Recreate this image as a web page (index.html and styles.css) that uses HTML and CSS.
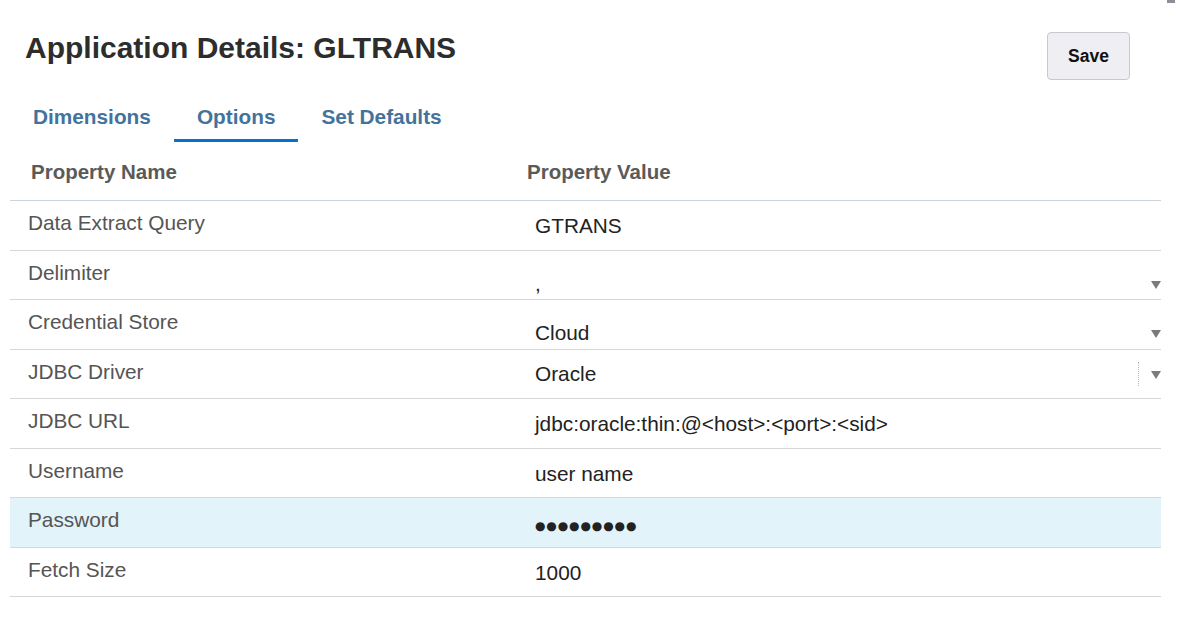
FILE: index.html
```html
<!DOCTYPE html>
<html>
<head>
<meta charset="utf-8">
<link rel="stylesheet" href="styles.css">
</head>
<body>
<div class="corner"></div>
<div class="page">
  <div class="title-row">
    <h1 class="title">Application Details: GLTRANS</h1>
    <button class="save">Save</button>
  </div>
  <div class="tabs">
    <div class="tab">Dimensions</div>
    <div class="tab active">Options</div>
    <div class="tab">Set Defaults</div>
  </div>
  <div class="table">
    <div class="row head">
      <div class="cell name">Property Name</div>
      <div class="cell value">Property Value</div>
    </div>
    <div class="row">
      <div class="cell name">Data Extract Query</div>
      <div class="cell value">GTRANS</div>
    </div>
    <div class="row">
      <div class="cell name">Delimiter</div>
      <div class="cell value select low"><span>,</span><svg class="arrow" width="10" height="8" viewBox="0 0 10 8"><polygon points="0,0 10,0 5,8" fill="#7b7b7b"/></svg></div>
    </div>
    <div class="row">
      <div class="cell name">Credential Store</div>
      <div class="cell value select low"><span>Cloud</span><svg class="arrow" width="10" height="8" viewBox="0 0 10 8"><polygon points="0,0 10,0 5,8" fill="#7b7b7b"/></svg></div>
    </div>
    <div class="row">
      <div class="cell name">JDBC Driver</div>
      <div class="cell value select"><span>Oracle</span><span class="sep"></span><svg class="arrow" width="10" height="8" viewBox="0 0 10 8"><polygon points="0,0 10,0 5,8" fill="#7b7b7b"/></svg></div>
    </div>
    <div class="row">
      <div class="cell name">JDBC URL</div>
      <div class="cell value">jdbc:oracle:thin:@&lt;host&gt;:&lt;port&gt;:&lt;sid&gt;</div>
    </div>
    <div class="row">
      <div class="cell name">Username</div>
      <div class="cell value">user name</div>
    </div>
    <div class="row selected">
      <div class="cell name">Password</div>
      <div class="cell value"><span class="dots">●●●●●●●●●</span></div>
    </div>
    <div class="row">
      <div class="cell name">Fetch Size</div>
      <div class="cell value">1000</div>
    </div>
  </div>
</div>
</body>
</html>
```

FILE: styles.css
```css
html, body {
  margin: 0;
  padding: 0;
  background: #ffffff;
}

body {
  font-family: "Liberation Sans", Arial, sans-serif;
  color: #333;
  position: relative;
  width: 1177px;
  height: 629px;
  overflow: hidden;
}

.corner {
  position: absolute;
  top: 0;
  left: 1167px;
  width: 8px;
  height: 3px;
  background: #8a8f96;
}

.page {
  padding: 0 16px 0 10px;
}

.title-row {
  display: flex;
  justify-content: space-between;
  align-items: flex-start;
  padding: 31px 31px 0 15px;
}

.title {
  margin: 0;
  font-size: 30px;
  line-height: 34px;
  font-weight: bold;
  color: #2d2d2d;
}

.save {
  margin-top: 1px;
  width: 83px;
  height: 48px;
  box-sizing: border-box;
  border: 1px solid #c6cad0;
  border-radius: 4px;
  background: #efeff3;
  font-family: "Liberation Sans", Arial, sans-serif;
  font-size: 17.5px;
  font-weight: bold;
  color: #111;
  padding: 0;
}

.tabs {
  display: flex;
  margin-top: 25px;
}

.tab {
  padding: 0 23px 10px;
  font-size: 20.8px;
  line-height: 24px;
  font-weight: bold;
  color: #43739c;
  border-bottom: 3px solid transparent;
}

.tab.active {
  border-bottom-color: #0572ce;
}

.table {
  width: 1151px;
}

.row {
  display: grid;
  grid-template-columns: 507px 1fr;
  height: 48.5px;
  border-bottom: 1px solid #d6d8d8;
}

.row.head {
  height: auto;
  padding: 18px 0 16px;
  border-bottom-color: #cdd4dc;
}

.row.selected {
  background: #e2f3fa;
}

.cell {
  font-size: 20.8px;
  line-height: 24px;
}

.name {
  padding: 10px 0 0 18px;
  color: #555;
}

.value {
  padding: 13px 0 0 18px;
  color: #222;
}

.head .cell {
  padding: 0;
  font-size: 20.5px;
  font-weight: bold;
  color: #5a5a5a;
}

.head .name {
  padding-left: 21px;
}

.head .value {
  padding-left: 10px;
}

.select {
  display: flex;
  align-items: center;
  align-self: start;
  padding-top: 12px;
}

.select.low {
  padding-top: 21px;
}

.select span:first-child {
  flex: 1;
}

.sep {
  width: 0;
  height: 24px;
  border-left: 1px dotted #bbb;
  margin-right: 12px;
}

.arrow {
  display: block;
  margin-top: 2px;
}

.dots {
  font-family: "DejaVu Sans", sans-serif;
  font-size: 12px;
  letter-spacing: 0.9px;
  color: #222;
}
```
